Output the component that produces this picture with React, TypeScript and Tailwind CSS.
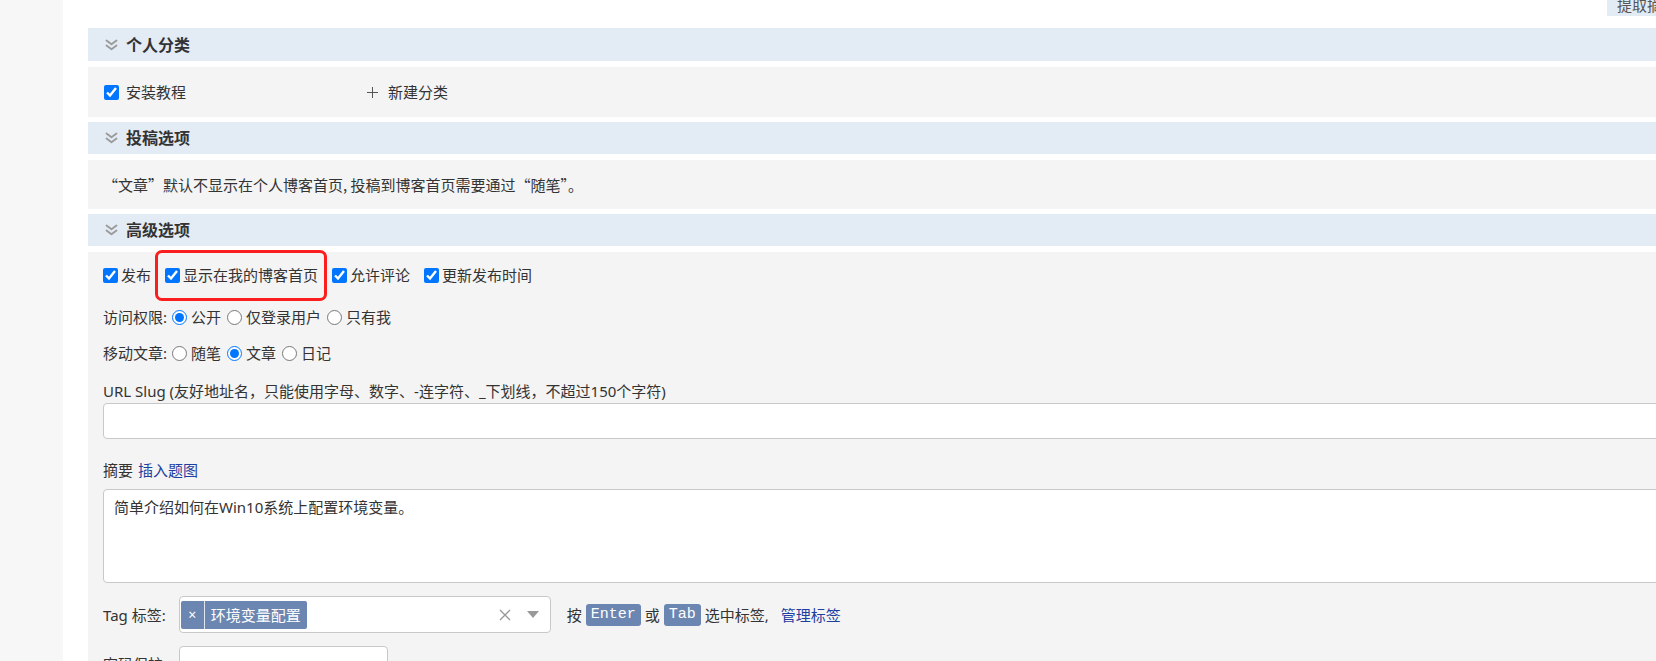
import React from "react";

// double chevron used in the section headers
const Chevrons = () => (
  <svg width="13" height="12" viewBox="0 0 13 12" fill="none" stroke="#9a9a9a" strokeWidth="1.8" strokeLinecap="round" strokeLinejoin="round">
    <path d="M1.5 1.5 L6.5 5.3 L11.5 1.5" />
    <path d="M1.5 6.5 L6.5 10.3 L11.5 6.5" />
  </svg>
);

function SectionHeader({ title, tall }: { title: string; tall?: boolean }) {
  return (
    <div className={`flex items-center gap-[8px] bg-[#e3ebf5] pl-[17px] ${tall ? "h-[33px]" : "h-[32px]"}`}>
      <Chevrons />
      <span className="text-[16px] font-bold leading-[20px] text-[#333]">{title}</span>
    </div>
  );
}

function Check({ label }: { label: string }) {
  return (
    <label className="flex items-center">
      <input type="checkbox" defaultChecked className="m-0 h-[15px] w-[15px]" />
      <span className="ml-[3px]">{label}</span>
    </label>
  );
}

function RadioGroup({ title, name, options, checked }: { title: string; name: string; options: string[]; checked: string }) {
  return (
    <div className="flex h-[36px] items-center">
      <span>{title}</span>
      <div className="ml-[5px] flex items-center gap-[6px]">
        {options.map((o) => (
          <label key={o} className="flex items-center gap-[4px]">
            <input type="radio" name={name} defaultChecked={o === checked} className="m-0 h-[15px] w-[15px]" />
            <span>{o}</span>
          </label>
        ))}
      </div>
    </div>
  );
}

const Kbd = ({ children }: { children: string }) => (
  <span className="mx-[4px] rounded-[3px] bg-[#6b86b1] px-[5px] font-['Liberation_Mono',monospace] text-[15px] leading-[22px] text-white">
    {children}
  </span>
);

export default function App() {
  return (
    <div className="flex h-[661px] w-full overflow-hidden bg-white font-['Noto_Sans','Noto_Sans_CJK_SC',sans-serif] text-[15px] leading-[22px] text-[#333]">
      {/* left gutter */}
      <div className="h-full w-[63px] shrink-0 bg-[#f7f7f7]" />

      <div className="min-w-0 flex-1 pl-[25px]">
        {/* top bar, button cut off by scroll */}
        <div className="flex h-[28px] justify-end">
          <div className="h-[16px] w-[49px] overflow-hidden whitespace-nowrap bg-[#e3ebf5] pl-[10px] text-[#555]">
            <div className="-mt-[6px] leading-[22px]">提取摘要</div>
          </div>
        </div>

        <div className="mr-[-40px]">
          {/* 个人分类 */}
          <SectionHeader title="个人分类" tall />
          <div className="mt-[6px] flex h-[50px] items-center bg-[#f4f4f4] pl-[16px]">
            <label className="flex w-[263px] items-center">
              <input type="checkbox" defaultChecked className="m-0 h-[15px] w-[15px]" />
              <span className="ml-[7px]">安装教程</span>
            </label>
            <div className="flex items-center gap-[10px] text-[#333]">
              <svg width="11" height="11" viewBox="0 0 11 11" stroke="#555" strokeWidth="1">
                <path d="M5.5 0 V11 M0 5.5 H11" />
              </svg>
              <span>新建分类</span>
            </div>
          </div>

          {/* 投稿选项 */}
          <div className="mt-[5px]">
            <SectionHeader title="投稿选项" />
          </div>
          <div className="mt-[6px] flex h-[49px] items-center bg-[#f4f4f4] pl-[15px]">
            <span className="font-['Noto_Sans_CJK_SC',sans-serif]">“文章”默认不显示在个人博客首页, 投稿到博客首页需要通过“随笔”。</span>
          </div>

          {/* 高级选项 */}
          <div className="mt-[5px]">
            <SectionHeader title="高级选项" />
          </div>
          <div className="relative mt-[6px] h-[420px] bg-[#f4f4f4] pl-[15px] pr-[15px] pt-[5px]">
            <div className="flex h-[36px] items-center gap-[14px]">
              <Check label="发布" />
              <Check label="显示在我的博客首页" />
              <Check label="允许评论" />
              <Check label="更新发布时间" />
            </div>
            {/* red annotation box */}
            <div className="pointer-events-none absolute left-[67px] top-[-2px] h-[51px] w-[172px] rounded-[7px] border-[3px] border-[#fa1e1e]" />

            <div className="mt-[6px]">
              <RadioGroup title="访问权限:" name="access" options={["公开", "仅登录用户", "只有我"]} checked="公开" />
            </div>
            <RadioGroup title="移动文章:" name="move" options={["随笔", "文章", "日记"]} checked="文章" />

            <div className="mt-[8px] flex h-[24px] items-center">
              URL Slug (友好地址名，只能使用字母、数字、-连字符、_下划线，不超过150个字符)
            </div>
            <div className="h-[36px] w-full rounded-[4px] border border-[#c8c8c8] bg-white" />

            <div className="mt-[19px] flex h-[24px] items-center">
              <span>摘要</span>
              <span className="ml-[5px] text-[#1f3fa0]">插入题图</span>
            </div>
            <div className="mt-[7px] h-[94px] w-full rounded-[4px] border border-[#c8c8c8] bg-white pl-[10px] pt-[6px]">
              简单介绍如何在Win10系统上配置环境变量。
            </div>

            <div className="mt-[13px] flex h-[37px] items-center">
              <span>Tag 标签:</span>
              <div className="ml-[13px] flex h-[37px] w-[372px] items-center rounded-[4px] border border-[#c8c8c8] bg-white pl-[1px]">
                <div className="flex h-[28px] items-stretch overflow-hidden rounded-[2px] bg-[#6b86b1] text-white">
                  <span className="flex w-[24px] items-center justify-center border-r border-[#dfe6f0] text-[14px]">×</span>
                  <span className="flex items-center px-[6px]">环境变量配置</span>
                </div>
                <svg className="ml-auto" width="12" height="12" viewBox="0 0 12 12" stroke="#999" strokeWidth="1.4">
                  <path d="M1 1 L11 11 M11 1 L1 11" />
                </svg>
                <svg className="ml-[16px] mr-[11px]" width="12" height="7" viewBox="0 0 12 7" fill="#999">
                  <path d="M0 0 H12 L6 7 Z" />
                </svg>
              </div>
              <span className="ml-[16px]">按</span>
              <Kbd>Enter</Kbd>
              <span>或</span>
              <Kbd>Tab</Kbd>
              <span>选中标签,</span>
              <span className="ml-[12px] text-[#1f3fa0]">管理标签</span>
            </div>

            <div className="mt-[13px] flex h-[36px] items-center">
              <span>密码保护:</span>
              <div className="ml-[12px] h-[36px] w-[209px] rounded-[4px] border border-[#c8c8c8] bg-white" />
            </div>
          </div>
        </div>
      </div>
    </div>
  );
}
